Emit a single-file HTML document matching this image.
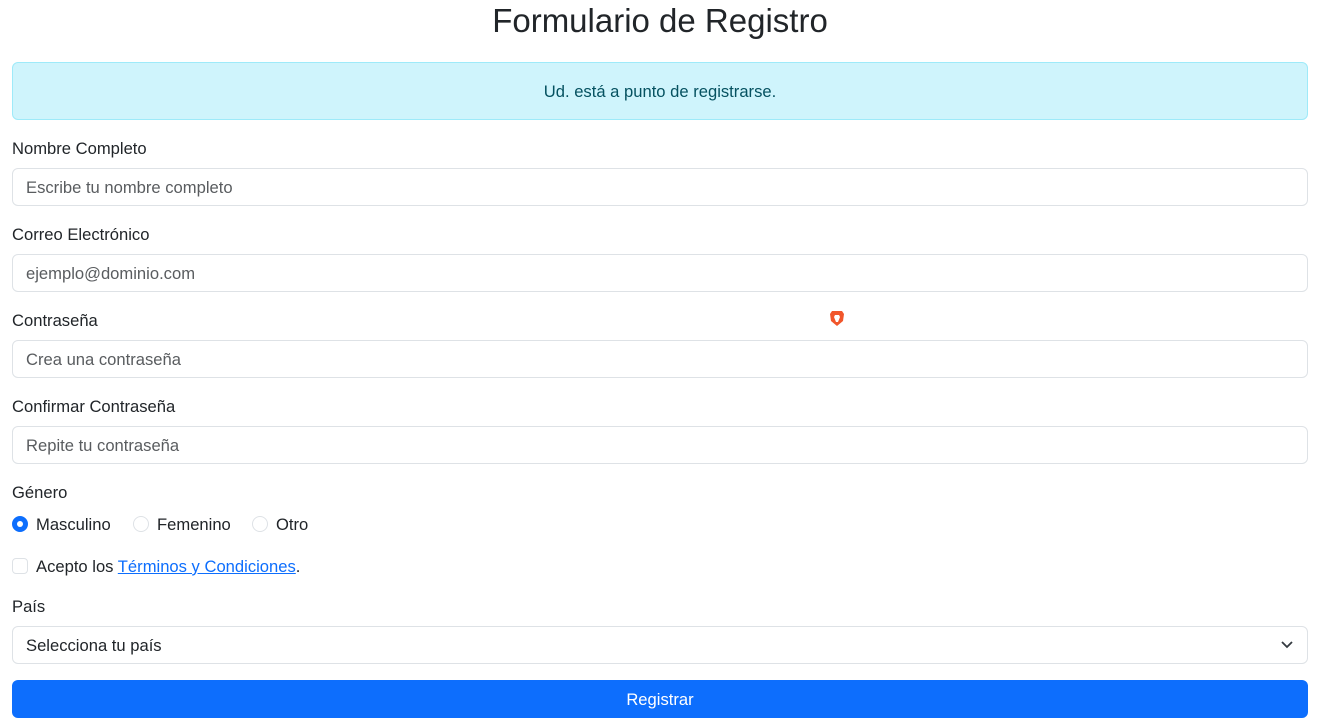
<!DOCTYPE html>
<html><head><meta charset="utf-8"><style>
*{box-sizing:border-box;margin:0;padding:0}
body{width:1320px;height:728px;background:#fff;font-family:"Liberation Sans",sans-serif;color:#212529;font-size:16.6px;position:relative;overflow:hidden}
.a{position:absolute}
h1{position:absolute;top:1px;left:0;width:1320px;text-align:center;font-weight:500;font-size:33px;line-height:40px}
.alert{left:12px;top:62px;width:1296px;height:58px;background:#cff4fc;border:1px solid #9eeaf9;border-radius:6px;color:#055160;text-align:center;line-height:57px}
.lbl{left:12px;line-height:22px}
.inp{left:12px;width:1296px;height:38px;border:1px solid #dee2e6;border-radius:6px;padding-left:13px;line-height:37px;color:#595c5f}
.radio{width:16px;height:16px;border:1px solid #dee2e6;border-radius:50%}
.btn{left:12px;top:680px;width:1296px;height:38px;background:#0d6efd;border-radius:6px;color:#fff;text-align:center;line-height:39px}
</style></head><body>
<h1>Formulario de Registro</h1>
<div class="a alert">Ud. está a punto de registrarse.</div>
<div class="a lbl" style="top:138px">Nombre Completo</div>
<div class="a inp" style="top:168px">Escribe tu nombre completo</div>
<div class="a lbl" style="top:224px">Correo Electrónico</div>
<div class="a inp" style="top:254px">ejemplo@dominio.com</div>
<div class="a lbl" style="top:310px">Contraseña</div>
<svg class="a" style="left:830px;top:310px" width="14" height="17" viewBox="0 0 14 17"><path d="M2 1h10l2 3-1 7-6 5-6-5-1-7z" fill="#f1562b"/><path d="M5 5h4l1 2-2 5h-2l-2-5z" fill="#fff"/></svg>
<div class="a inp" style="top:340px">Crea una contraseña</div>
<div class="a lbl" style="top:396px">Confirmar Contraseña</div>
<div class="a inp" style="top:426px">Repite tu contraseña</div>
<div class="a lbl" style="top:482px">Género</div>
<div class="a radio" style="left:12px;top:516px;background:#0d6efd;border-color:#0d6efd"><div style="width:6px;height:6px;background:#fff;border-radius:50%;margin:4px"></div></div>
<div class="a" style="left:36px;top:514px;line-height:22px">Masculino</div>
<div class="a radio" style="left:133px;top:516px"></div>
<div class="a" style="left:157px;top:514px;line-height:22px">Femenino</div>
<div class="a radio" style="left:252px;top:516px"></div>
<div class="a" style="left:276px;top:514px;line-height:22px">Otro</div>
<div class="a" style="left:12px;top:558px;width:16px;height:16px;border:1px solid #dee2e6;border-radius:4px"></div>
<div class="a" style="left:36px;top:556px;line-height:22px">Acepto los <span style="color:#0d6efd;text-decoration:underline">Términos y Condiciones</span>.</div>
<div class="a lbl" style="top:596px">País</div>
<div class="a inp" style="top:626px;color:#212529">Selecciona tu país</div>
<svg class="a" style="left:1280px;top:639px" width="14" height="12" viewBox="0 0 14 12"><path d="M2 3l5 5 5-5" fill="none" stroke="#343a40" stroke-width="1.8"/></svg>
<div class="a btn">Registrar</div>
</body></html>
